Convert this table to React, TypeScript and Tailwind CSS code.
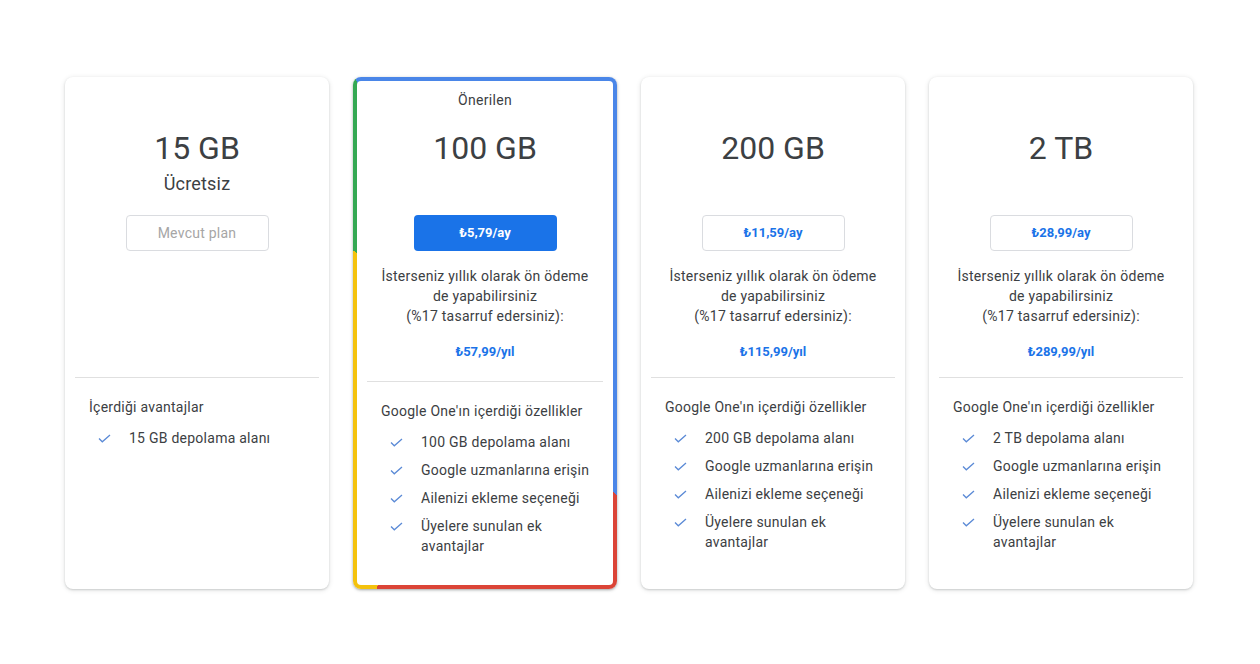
const PLANS = [
  {
    id: 'free',
    size: '15 GB',
    subtitle: 'Ücretsiz',
    button: 'Mevcut plan',
    yearly: null as string | null,
    heading: 'İçerdiği avantajlar',
    features: ['15 GB depolama alanı'],
  },
  {
    id: '100',
    size: '100 GB',
    subtitle: null as string | null,
    button: '₺5,79/ay',
    yearly: '₺57,99/yıl',
    heading: "Google One'ın içerdiği özellikler",
    features: ['100 GB depolama alanı', 'Google uzmanlarına erişin', 'Ailenizi ekleme seçeneği', 'Üyelere sunulan ek avantajlar'],
    recommended: true,
  },
  {
    id: '200',
    size: '200 GB',
    subtitle: null,
    button: '₺11,59/ay',
    yearly: '₺115,99/yıl',
    heading: "Google One'ın içerdiği özellikler",
    features: ['200 GB depolama alanı', 'Google uzmanlarına erişin', 'Ailenizi ekleme seçeneği', 'Üyelere sunulan ek avantajlar'],
  },
  {
    id: '2tb',
    size: '2 TB',
    subtitle: null,
    button: '₺28,99/ay',
    yearly: '₺289,99/yıl',
    heading: "Google One'ın içerdiği özellikler",
    features: ['2 TB depolama alanı', 'Google uzmanlarına erişin', 'Ailenizi ekleme seçeneği', 'Üyelere sunulan ek avantajlar'],
  },
]

type Plan = (typeof PLANS)[number] & { recommended?: boolean }

function Check() {
  return (
    <svg width="13" height="9" viewBox="0 0 13 9" className="shrink-0 mt-[6px]" aria-hidden="true">
      <path d="M1 4.5l3.3 3.3L12 1" fill="none" stroke="#5b8ad6" strokeWidth="1.3" />
    </svg>
  )
}

function PlanBody({ plan }: { plan: Plan }) {
  const free = plan.id === 'free'
  return (
    <>
      {/* Top: size, price */}
      <div className={`flex flex-col items-center ${plan.recommended ? 'h-[300px] pt-[9px]' : 'h-[300px] pt-[51px]'}`}>
        {plan.recommended && (
          <p className="text-[14px] leading-5 tracking-[0.3px] text-[#3c4043] mb-[18px]">Önerilen</p>
        )}
        <h2 className="text-[32px] leading-10 text-[#3c4043]">{plan.size}</h2>
        <p className="text-[18px] leading-6 mt-1 h-6 tracking-[0.2px] text-[#3c4043]">{plan.subtitle}</p>
        <button
          className={
            free
              ? 'mt-[19px] w-[143px] h-[36px] rounded-[4px] border border-[#dadce0] text-[14px] tracking-[0.25px] text-[#a6a6a6]'
              : plan.recommended
                ? 'mt-[19px] w-[143px] h-[36px] rounded-[4px] bg-[#1a73e8] text-[13px] font-bold text-white'
                : 'mt-[19px] w-[143px] h-[36px] rounded-[4px] border border-[#dadce0] text-[13px] font-bold text-[#1a73e8]'
          }
        >
          {plan.button}
        </button>
        {plan.yearly && (
          <>
            <p className="mt-[15px] text-center text-[14px] leading-5 tracking-[0.25px] text-[#3c4043]">
              İsterseniz yıllık olarak ön ödeme
              <br />
              de yapabilirsiniz
              <br />
              (%17 tasarruf edersiniz):
            </p>
            <p className="mt-4 text-[13px] leading-5 font-bold text-[#1a73e8]">{plan.yearly}</p>
          </>
        )}
      </div>

      <div className="mx-[10px] border-t border-[#e0e0e0]" />

      {/* Features */}
      <div className="pl-6 pr-4 pt-[19px]">
        <p className="text-[14px] leading-5 tracking-[0.25px] text-[#3c4043]">{plan.heading}</p>
        <ul className="mt-[11px] flex flex-col gap-2 pl-[9px]">
          {plan.features.map((f) => (
            <li key={f} className="flex items-start gap-[18px]">
              <Check />
              <span className="flex-1 text-[14px] leading-5 tracking-[0.25px] text-[#3c4043]">{f}</span>
            </li>
          ))}
        </ul>
      </div>
    </>
  )
}

export default function App() {
  return (
    <main className="min-h-screen bg-white pt-[77px] pl-[65px] font-['Roboto','Noto_Sans',sans-serif]">
      <div className="flex gap-6">
        {PLANS.map((plan) =>
          (plan as Plan).recommended ? (
            <div
              key={plan.id}
              className="w-[264px] h-[512px] rounded-[8px] p-[4px] bg-[image:conic-gradient(#4a86e8_0deg_141deg,#db4437_141deg_203deg,#f4c20d_203deg_302deg,#34a853_302deg_333deg,#4a86e8_333deg)] shadow-[0_1px_2px_rgba(60,64,67,0.3),0_1px_3px_1px_rgba(60,64,67,0.15)]"
            >
              <div className="h-full rounded-[4px] bg-white">
                <PlanBody plan={plan as Plan} />
              </div>
            </div>
          ) : (
            <div
              key={plan.id}
              className="w-[264px] h-[512px] rounded-[8px] bg-white shadow-[0_1px_2px_rgba(60,64,67,0.2),0_1px_4px_1px_rgba(60,64,67,0.1)]"
            >
              <PlanBody plan={plan as Plan} />
            </div>
          ),
        )}
      </div>
    </main>
  )
}
